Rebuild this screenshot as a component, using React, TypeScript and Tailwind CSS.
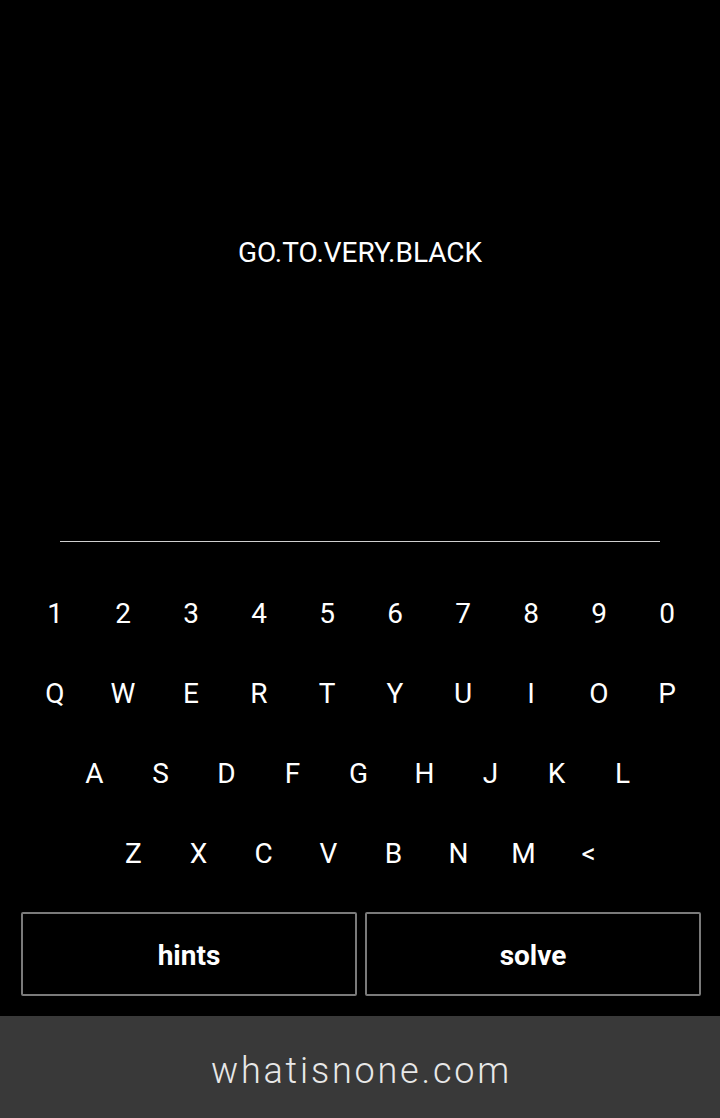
import { useState } from "react";

const rows: { keys: string[]; w: string; pad: string }[] = [
  { keys: ["1", "2", "3", "4", "5", "6", "7", "8", "9", "0"], w: "w-[68px]", pad: "pl-[2px]" },
  { keys: ["Q", "W", "E", "R", "T", "Y", "U", "I", "O", "P"], w: "w-[68px]", pad: "pl-[2px]" },
  { keys: ["A", "S", "D", "F", "G", "H", "J", "K", "L"], w: "w-[66px]", pad: "pr-[3px]" },
  { keys: ["Z", "X", "C", "V", "B", "N", "M", "<"], w: "w-[65px]", pad: "pl-[2px]" },
];

export default function App() {
  const [answer, setAnswer] = useState("");

  const press = (k: string) => {
    if (k === "<") setAnswer((a) => a.slice(0, -1));
    else setAnswer((a) => a + k);
  };

  return (
    <div className="min-h-[1118px] bg-black text-white flex flex-col font-['Roboto',sans-serif]">
      <div className="h-[497px] flex flex-col items-center">
        <p className="mt-[236px] text-[28px] leading-[34px]">GO.TO.VERY.BLACK</p>
      </div>

      <div className="mx-auto w-[600px] h-[45px] flex items-end justify-center border-b border-[#d0d0d0] text-[24px]">
        {answer}
      </div>

      <div className="mt-[32px] flex flex-col">
        {rows.map((row, i) => (
          <div key={i} className={`h-[80px] flex justify-center ${row.pad}`}>
            {row.keys.map((k) => (
              <button
                key={k}
                onClick={() => press(k)}
                className={`${row.w} h-[80px] flex items-center justify-center text-[28px] leading-none`}
              >
                {k}
              </button>
            ))}
          </div>
        ))}
      </div>

      <div className="mt-[18px] pl-[21px] pr-[19px] flex gap-[8px]">
        <button className="flex-1 h-[84px] pt-[3px] border-2 border-[#7a7a7a] rounded-[2px] text-[28px] font-bold">
          hints
        </button>
        <button className="flex-1 h-[84px] pt-[3px] border-2 border-[#7a7a7a] rounded-[2px] text-[28px] font-bold">
          solve
        </button>
      </div>

      <div className="mt-[20px] h-[102px] pt-[8px] bg-[#393939] flex items-center justify-center">
        <span className="pl-[3px] text-[36px] font-light tracking-[2.8px] text-[#e8e8e8]">whatisnone.com</span>
      </div>
    </div>
  );
}
